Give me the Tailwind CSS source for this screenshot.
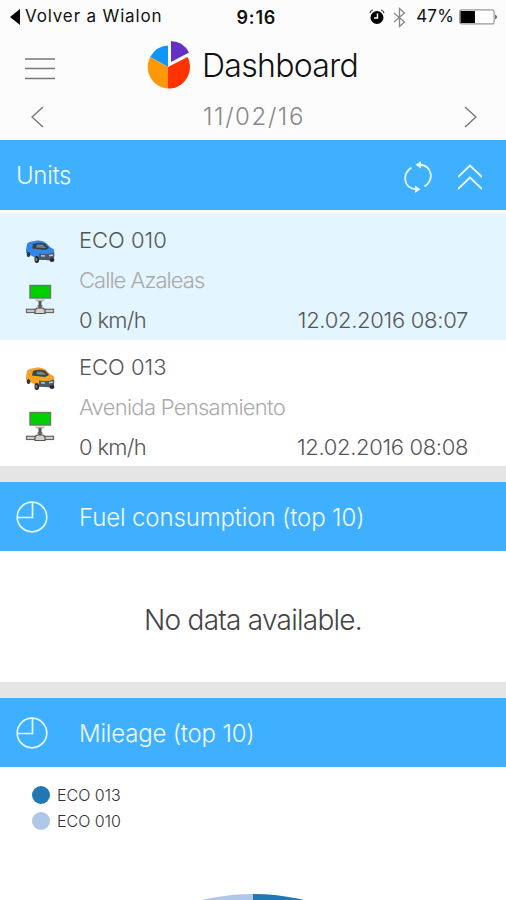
<!DOCTYPE html>
<html lang="en">
<head>
<meta charset="utf-8">
<title>Dashboard</title>
<script src="https://cdn.jsdelivr.net/npm/@tailwindcss/browser@4"></script>
</head>
<body class="w-[506px] h-[900px] overflow-hidden bg-white font-['Inter','Liberation_Sans',sans-serif] font-light text-[#555] whitespace-nowrap">
<svg class="hidden">
  <symbol id="van" viewBox="0 0 30 24">
    <path d="M1 10 2 4Q3 2 7 1.500L12 .5Q18 0 21 3L25 7 29 9.500 29.500 16 27 20 12 20 9 17 1 13Z" fill="currentColor"/>
    <path d="M8 4Q14 2 20 3.500L24 8 20 10 7 8.500Z" fill="#35434c"/>
    <path d="M12 4.500 18 4.800 21 8 11 7.500Z" fill="#71858a"/>
    <path d="M14 13.500Q22 15 29 12.500L29 19 26 20.500 14 19.500Z" fill="#4b5968"/>
    <path d="M16 15.800 20 16M24 15.800 28 15" stroke="#b9c8d5" stroke-width="1.500"/>
    <ellipse cx="3.500" cy="14.500" rx="1.800" ry="2.500" fill="#333"/>
    <ellipse cx="11.800" cy="19.500" rx="2.300" ry="3.600" fill="#29292b"/>
    <ellipse cx="11.400" cy="19.500" rx=".9" ry="1.700" fill="#888"/>
    <ellipse cx="27" cy="20" rx="2.400" ry="2" fill="#29292b"/>
  </symbol>
  <symbol id="net" viewBox="0 0 30 31">
    <rect x="5" y="1.500" width="20.500" height="12.500" fill="#00d000" stroke="#5d7d5d" stroke-width="1.400"/>
    <path d="M9.500 15.500H20.500L18 17.500H12Z" fill="#b5b5ae"/>
    <path d="M15 17V25" stroke="#555" stroke-width="3"/>
    <path d="M12.500 22H17.500" stroke="#666" stroke-width="1.500"/>
    <rect x="1.500" y="25.300" width="27" height="3.200" fill="#d2d0c8" stroke="#656565" stroke-width="1.200"/>
    <path d="M12 24H18L20 26V29.500H10V26Z" fill="#d2d0c8" stroke="#555" stroke-width="1.200"/>
  </symbol>
  <symbol id="clock" viewBox="0 0 32 32">
    <g fill="none" stroke="#e6f6ff" stroke-width="1.700"><circle cx="16" cy="16" r="14.800"/><path d="M16.500 1.200V16.500H1.200"/></g>
  </symbol>
</svg>

<header class="h-[140px] bg-[#fcfcfc]">
  <div class="flex h-8 items-center pt-[2px] pl-[10px] pr-[8px] text-[17px] font-normal text-[#111]">
    <svg class="w-[10px] h-4" viewBox="0 0 10 16"><path d="M10 0V16L0 8Z" fill="#000"/></svg>
    <span class="ml-[5px] w-[212px] tracking-[0.85px]">Volver a Wialon</span>
    <span class="w-[133px] text-[18px] font-semibold tracking-[0.8px]">9:16</span>
    <svg class="w-4 h-4" viewBox="0 0 16 16"><circle cx="8" cy="8.500" r="6.500" fill="#000"/><path d="M1 4Q1.500 1.500 4 1M15 4Q14.500 1.500 12 1" fill="none" stroke="#333" stroke-width="1.200"/><path d="M8.500 4.500V9H5" fill="none" stroke="#fff" stroke-width="1.500"/></svg>
    <svg class="ml-[8px] w-[13px] h-[21px]" viewBox="0 0 13 21"><path d="M1 6 11.500 15 6.500 19.500V1.500L11.500 6 1 15" fill="none" stroke="#888" stroke-width="1.300"/></svg>
    <span class="ml-[10px] w-[43px] tracking-[0.2px]">47%</span>
    <svg class="w-[39px] h-4" viewBox="0 0 39 16"><rect x=".7" y=".9" width="34.500" height="14" rx="2" fill="#fff" stroke="#999" stroke-width="1.200"/><rect x="1.500" y="2" width="14.500" height="12" fill="#000"/><path d="M36.500 5.500Q39 8 36.500 10.500Z" fill="#111"/></svg>
  </div>
  <div class="flex h-[66px] items-center pl-[25px]">
    <svg class="mt-[7px] w-[30px] h-[22px]" viewBox="0 0 30 22"><path d="M0 1H30M0 10.500H30M0 20.500H30" stroke="#777" stroke-width="1.700"/></svg>
    <svg class="ml-[91px] w-[46px] h-[50px]" viewBox="0 0 46 50"><path d="M22 27V5.500A21.500 21.500 0 0 0 4.200 17Z" fill="#0f96fa"/><path d="M22 27 4.200 17A21.500 21.500 0 0 0 22 48.500Z" fill="#ff9807"/><path d="M22 27V48.500A21.500 21.500 0 0 0 41.500 17Z" fill="#ff3300"/><path d="M25 22V1A21 21 0 0 1 43 12.500Z" fill="#6231c4"/></svg>
    <h1 class="ml-[10px] mt-[2px] text-[32px] text-[#111] tracking-[-0.7px]">Dashboard</h1>
  </div>
  <div class="flex h-[38px] items-center justify-between pl-[31px] pr-[29px] text-[#888]">
    <svg class="w-[13px] h-[22px]" viewBox="0 0 13 22"><path d="M12 1 1 11 12 21" fill="none" stroke="#777" stroke-width="1.400"/></svg>
    <span class="text-[24px] tracking-[1.6px]">11/02/16</span>
    <svg class="w-[13px] h-[22px]" viewBox="0 0 13 22"><path d="M1 1 12 11 1 21" fill="none" stroke="#777" stroke-width="1.400"/></svg>
  </div>
</header>

<section>
  <div class="flex h-[70px] items-center bg-[#3fafff] pl-[16px] pr-[24px] text-[24px] text-[#effaff]">
    <h2 class="flex-1 pt-px tracking-[-0.3px]">Units</h2>
    <svg class="mt-[4px] w-7 h-8" viewBox="0 0 28 32"><g fill="none" stroke="#e6f6ff" stroke-width="1.800"><path d="M7.500 6.500C-2 13 -1 27 12.500 28.500M20.500 25.500C30 19 29 5 15.500 3.500"/></g><path d="M17 0 11.500 3.700 17 7.500ZM11 24.500 16.500 28.300 11 32Z" fill="#e6f6ff"/></svg>
    <svg class="ml-[26px] mt-[3px] w-6 h-[26px]" viewBox="0 0 24 26"><path d="M0 13 12 1.500 24 13M0 25 12 13.500 24 25" fill="none" stroke="#effaff" stroke-width="1.800"/></svg>
  </div>
  <div class="mt-[3px] flex h-[127px] bg-[#e3f5ff] pl-[25px] pr-[38px] text-[22px]">
    <div class="w-[54px] pt-[27px] text-[#3485e8]">
      <svg class="w-[30px] h-6"><use href="#van"/></svg>
      <svg class="mt-[20px] w-[30px] h-[31px]"><use href="#net"/></svg>
    </div>
    <div class="flex-1 pt-[7px] leading-10">
      <p>ECO 010</p>
      <p class="text-[#aaa] tracking-[-0.95px]">Calle Azaleas</p>
      <div class="flex justify-between"><span class="tracking-[-0.7px]">0 km/h</span><span class="tracking-[-0.3px]">12.02.2016 08:07</span></div>
    </div>
  </div>
  <div class="flex h-[126px] bg-white pl-[25px] pr-[38px] text-[22px]">
    <div class="w-[54px] pt-[27px] text-[#f5a22a]">
      <svg class="w-[30px] h-6"><use href="#van"/></svg>
      <svg class="mt-[20px] w-[30px] h-[31px]"><use href="#net"/></svg>
    </div>
    <div class="flex-1 pt-[7px] leading-10">
      <p>ECO 013</p>
      <p class="text-[#aaa] tracking-[-0.72px]">Avenida Pensamiento</p>
      <div class="flex justify-between"><span class="tracking-[-0.7px]">0 km/h</span><span class="tracking-[-0.35px]">12.02.2016 08:08</span></div>
    </div>
  </div>
</section>

<section class="border-t-[16px] border-[#e5e5e5]">
  <div class="flex h-[69px] items-center bg-[#3fafff] pl-[16px] text-[24px] text-[#effaff]">
    <svg class="mr-[31px] w-8 h-8"><use href="#clock"/></svg>
    <h2 class="pt-[2px] tracking-[-0.13px]">Fuel consumption (top 10)</h2>
  </div>
  <p class="flex h-[131px] items-center justify-center pt-[7px] text-[28px] text-[#444] tracking-[-0.75px]">No data available.</p>
</section>

<section class="border-t-[16px] border-[#e5e5e5]">
  <div class="flex h-[69px] items-center bg-[#3fafff] pl-[16px] text-[24px] text-[#effaff]">
    <svg class="mr-[31px] w-8 h-8"><use href="#clock"/></svg>
    <h2 class="pt-[2px] tracking-[-0.2px]">Mileage (top 10)</h2>
  </div>
  <ul class="h-[127px] pl-[32px] pt-[15px] text-[16px] leading-[26px] text-[#333]">
    <li class="flex items-center gap-[7px]"><i class="size-[18px] rounded-full bg-[#1f77b4]"></i><span>ECO 013</span></li>
    <li class="flex h-[25px] items-center gap-[7px]"><i class="size-[18px] rounded-full bg-[#aec7e8]"></i><span>ECO 010</span></li>
  </ul>
  <svg class="mx-auto block w-[440px] h-[6px]" viewBox="0 0 440 6"><path d="M220 0A220 220 0 0 0 0 220H220Z" fill="#aec7e8"/><path d="M220 0A220 220 0 0 1 440 220H220Z" fill="#1f77b4"/></svg>
</section>
</body>
</html>
